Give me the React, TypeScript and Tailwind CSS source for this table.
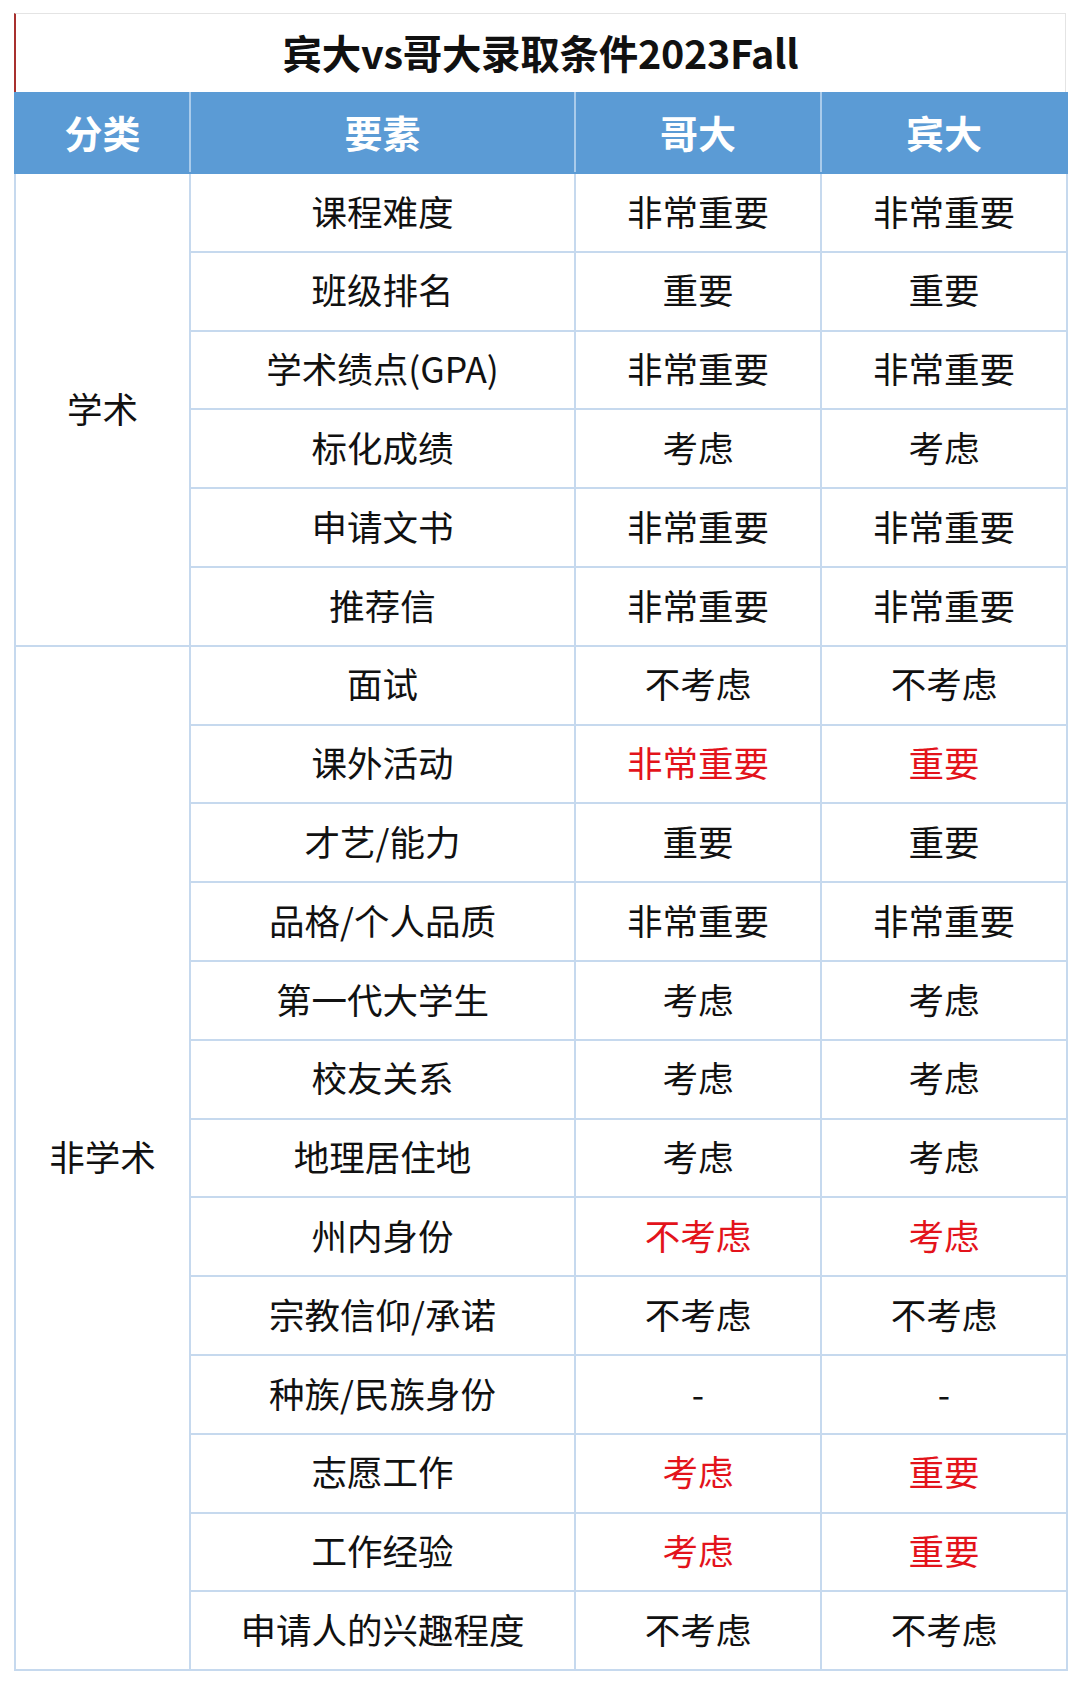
import React from "react";

type Row = { name: string; c: string; p: string; cr?: boolean; pr?: boolean };

const academic: Row[] = [
  { name: "课程难度", c: "非常重要", p: "非常重要" },
  { name: "班级排名", c: "重要", p: "重要" },
  { name: "学术绩点(GPA)", c: "非常重要", p: "非常重要" },
  { name: "标化成绩", c: "考虑", p: "考虑" },
  { name: "申请文书", c: "非常重要", p: "非常重要" },
  { name: "推荐信", c: "非常重要", p: "非常重要" },
];

const nonAcademic: Row[] = [
  { name: "面试", c: "不考虑", p: "不考虑" },
  { name: "课外活动", c: "非常重要", p: "重要", cr: true, pr: true },
  { name: "才艺/能力", c: "重要", p: "重要" },
  { name: "品格/个人品质", c: "非常重要", p: "非常重要" },
  { name: "第一代大学生", c: "考虑", p: "考虑" },
  { name: "校友关系", c: "考虑", p: "考虑" },
  { name: "地理居住地", c: "考虑", p: "考虑" },
  { name: "州内身份", c: "不考虑", p: "考虑", cr: true, pr: true },
  { name: "宗教信仰/承诺", c: "不考虑", p: "不考虑" },
  { name: "种族/民族身份", c: "-", p: "-" },
  { name: "志愿工作", c: "考虑", p: "重要", cr: true, pr: true },
  { name: "工作经验", c: "考虑", p: "重要", cr: true, pr: true },
  { name: "申请人的兴趣程度", c: "不考虑", p: "不考虑" },
];

const cell = "border-2 border-[#c6d9ee] text-center align-middle px-0 pt-0 pb-[4px]";

function Rows({ rows, label }: { rows: Row[]; label: string }) {
  return (
    <>
      {rows.map((r, i) => (
        <tr key={r.name} className="h-[78.8px]">
          {i === 0 && (
            <td rowSpan={rows.length} className={cell}>
              {label}
            </td>
          )}
          <td className={cell}>{r.name}</td>
          <td className={`${cell} ${r.cr ? "text-[#e3131b]" : ""}`}>{r.c}</td>
          <td className={`${cell} ${r.pr ? "text-[#e3131b]" : ""}`}>{r.p}</td>
        </tr>
      ))}
    </>
  );
}

export default function App() {
  return (
    <div
      className="w-[1080px] h-[1685px] bg-white pt-[13px] pl-[14px]"
      style={{ fontFamily: '"Noto Sans CJK SC", "Noto Sans", sans-serif' }}
    >
      <div className="w-[1052px]">
        <div className="h-[79px] border-t border-t-[#e4e4e4] border-l-2 border-l-[#a8302e] border-r border-r-[#e4e4e4] flex items-center justify-center">
          <span className="text-[39.5px] font-bold text-[#111] leading-none tracking-[-0.3px] pb-[2px]">
            宾大vs哥大录取条件2023Fall
          </span>
        </div>
        <table className="w-[1052px] table-fixed border-collapse border-2 border-[#8fadcc] text-[35.5px] text-[#111] leading-none">
          <colgroup>
            <col className="w-[175px]" />
            <col className="w-[385px]" />
            <col className="w-[246px]" />
            <col className="w-[246px]" />
          </colgroup>
          <thead>
            <tr className="h-[80px] bg-[#5b9bd5] text-white font-bold text-[38px]">
              <th className="border-2 border-[#5b9bd5] border-r-[#a9cbeb] font-bold pb-[3px]">分类</th>
              <th className="border-2 border-[#5b9bd5] border-r-[#a9cbeb] font-bold pb-[3px]">要素</th>
              <th className="border-2 border-[#5b9bd5] border-r-[#a9cbeb] font-bold pb-[3px]">哥大</th>
              <th className="border-2 border-[#5b9bd5] font-bold pb-[3px]">宾大</th>
            </tr>
          </thead>
          <tbody>
            <Rows rows={academic} label="学术" />
            <Rows rows={nonAcademic} label="非学术" />
          </tbody>
        </table>
      </div>
    </div>
  );
}
